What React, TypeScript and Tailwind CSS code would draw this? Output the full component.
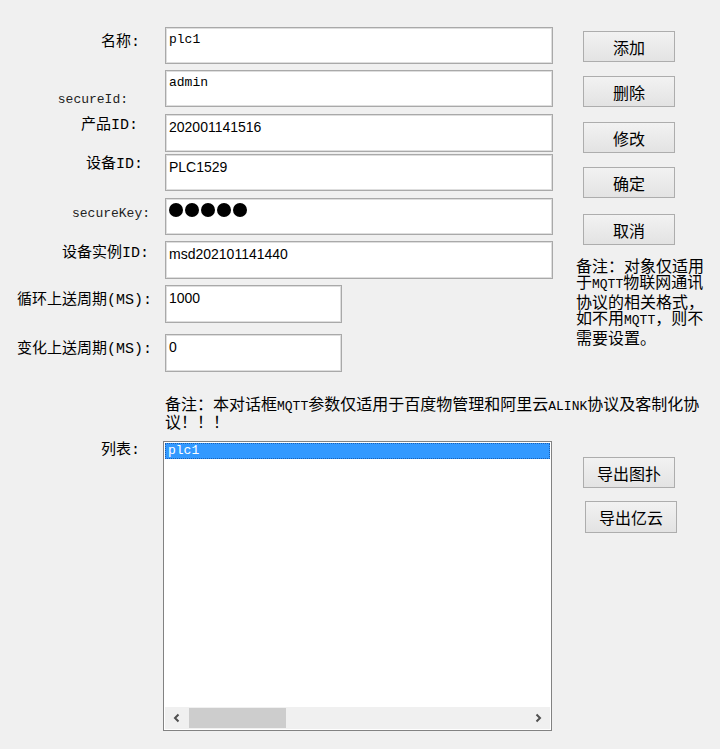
import React from "react";

const lbl = "font-['Liberation_Mono','Noto_Sans_CJK_SC',monospace] text-[15px] leading-[20px] text-black";
const small = "font-['Liberation_Mono','Noto_Sans_CJK_SC',monospace] text-[13px] leading-[16px] text-[#222]";
const inputBox = "bg-white border border-[#a9a9a9] shadow-[inset_0_0_0_1px_#dedede] shrink-0";
const monoVal = "font-['Liberation_Mono',monospace] text-[13px] leading-[16px] text-black pl-[3px] pt-[4px]";
const sansVal = "font-['Liberation_Sans',Arial,sans-serif] text-[14px] leading-[16px] text-black pl-[3px] pt-[4px]";
const btn = "w-[92px] h-[31px] border border-[#adadad] bg-gradient-to-b from-[#f2f2f2] to-[#e3e3e3] flex items-center justify-center font-['Noto_Sans_CJK_SC',sans-serif] text-[16px] leading-[20px] text-black shrink-0";
const noteCls = "font-['Noto_Sans_CJK_SC',sans-serif] text-[16px] text-black";
const lat = "font-['Liberation_Mono',monospace] text-[13px]";

function Row({
  label,
  labelCls,
  pr,
  pt,
  mt,
  w,
  h,
  children,
}: {
  label: string;
  labelCls: string;
  pr: string;
  pt: string;
  mt: string;
  w: string;
  h: string;
  children?: React.ReactNode;
}) {
  return (
    <div className={`flex items-start ${mt}`}>
      <div className={`w-[165px] shrink-0 text-right whitespace-nowrap ${pr} ${pt} ${labelCls}`}>{label}</div>
      <div className={`${inputBox} ${w} ${h}`}>{children}</div>
    </div>
  );
}

export default function App() {
  return (
    <div className="w-[720px] h-[749px] bg-[#f0f0f0] overflow-hidden">
      <div className="flex pt-[27px]">
        <div className="flex flex-col w-[553px] shrink-0">
          <Row label="名称:" labelCls={lbl} pr="pr-[25px]" pt="pt-[6px]" mt="mt-0" w="w-[388px]" h="h-[37px]">
            <div className={monoVal}>plc1</div>
          </Row>
          <Row label="secureId:" labelCls={small} pr="pr-[37px]" pt="pt-[22px]" mt="mt-[6px]" w="w-[388px]" h="h-[37px]">
            <div className={monoVal}>admin</div>
          </Row>
          <Row label="产品ID:" labelCls={lbl} pr="pr-[27px]" pt="pt-[2px]" mt="mt-[6px]" w="w-[388px]" h="h-[38px]">
            <div className={sansVal}>202001141516</div>
          </Row>
          <Row label="设备ID:" labelCls={lbl} pr="pr-[22px]" pt="pt-[1px]" mt="mt-[2px]" w="w-[388px]" h="h-[37px]">
            <div className={sansVal}>PLC1529</div>
          </Row>
          <Row label="secureKey:" labelCls={small} pr="pr-[15px]" pt="pt-[8px]" mt="mt-[7px]" w="w-[388px]" h="h-[37px]">
            <div className="flex gap-[2px] pl-[3px] pt-[4px]">
              {[0, 1, 2, 3, 4].map((i) => (
                <div key={i} className="w-[14px] h-[14px] rounded-full bg-black" />
              ))}
            </div>
          </Row>
          <Row label="设备实例ID:" labelCls={lbl} pr="pr-[16px]" pt="pt-[3px]" mt="mt-[6px]" w="w-[388px]" h="h-[38px]">
            <div className={sansVal}>msd202101141440</div>
          </Row>
          <Row label="循环上送周期(MS):" labelCls={lbl} pr="pr-[13px]" pt="pt-[6px]" mt="mt-[6px]" w="w-[177px]" h="h-[38px]">
            <div className={sansVal}>1000</div>
          </Row>
          <Row label="变化上送周期(MS):" labelCls={lbl} pr="pr-[13px]" pt="pt-[6px]" mt="mt-[11px]" w="w-[177px]" h="h-[38px]">
            <div className={sansVal}>0</div>
          </Row>
        </div>
        <div className="flex flex-col ml-[30px] pt-[4px]">
          <div className={btn}>添加</div>
          <div className={`${btn} mt-[14px]`}>删除</div>
          <div className={`${btn} mt-[15px]`}>修改</div>
          <div className={`${btn} mt-[14px]`}>确定</div>
          <div className={`${btn} mt-[16px]`}>取消</div>
          <div className={`${noteCls} leading-[16px] mt-[12px] -ml-[7px] whitespace-nowrap`}>
            <div>备注：对象仅适用</div>
            <div>于<span className={lat}>MQTT</span>物联网通讯</div>
            <div>协议的相关格式，</div>
            <div>如不用<span className={lat}>MQTT</span>，则不</div>
            <div>需要设置。</div>
          </div>
        </div>
      </div>

      <div className={`${noteCls} leading-[15px] ml-[165px] mt-[24px] whitespace-nowrap`}>
        <div>
          备注：本对话框<span className={lat}>MQTT</span>参数仅适用于百度物管理和阿里云<span className={lat}>ALINK</span>协议及客制化协
        </div>
        <div>议！！！</div>
      </div>

      <div className="flex items-start mt-[12px]">
        <div className={`w-[163px] shrink-0 text-right pr-[23px] pt-0 ${lbl}`}>列表:</div>
        <div className="w-[389px] h-[290px] bg-white border border-[#828282] flex flex-col shrink-0">
          <div className="mx-[1px] mt-[1px] h-[16px] bg-[#3399ff] border border-dotted border-[#1a5fb4] font-['Liberation_Mono',monospace] text-[13px] leading-[14px] text-white pl-[2px]">
            plc1
          </div>
          <div className="flex-1" />
          <div className="h-[22px] mx-[1px] mb-[1px] bg-[#f0f0f0] flex items-center">
            <div className="w-[24px] h-full flex items-center justify-center">
              <svg width="10" height="10" viewBox="0 0 10 10">
                <path d="M6.5 1.5 L3 5 L6.5 8.5" fill="none" stroke="#505050" strokeWidth="2" />
              </svg>
            </div>
            <div className="w-[97px] h-[20px] bg-[#cdcdcd]" />
            <div className="flex-1" />
            <div className="w-[24px] h-full flex items-center justify-center">
              <svg width="10" height="10" viewBox="0 0 10 10">
                <path d="M3.5 1.5 L7 5 L3.5 8.5" fill="none" stroke="#505050" strokeWidth="2" />
              </svg>
            </div>
          </div>
        </div>
        <div className="flex flex-col ml-[31px] pt-[16px]">
          <div className={btn}>导出图扑</div>
          <div className={`${btn} mt-[13px] ml-[2px] h-[32px]`}>导出亿云</div>
        </div>
      </div>
    </div>
  );
}
